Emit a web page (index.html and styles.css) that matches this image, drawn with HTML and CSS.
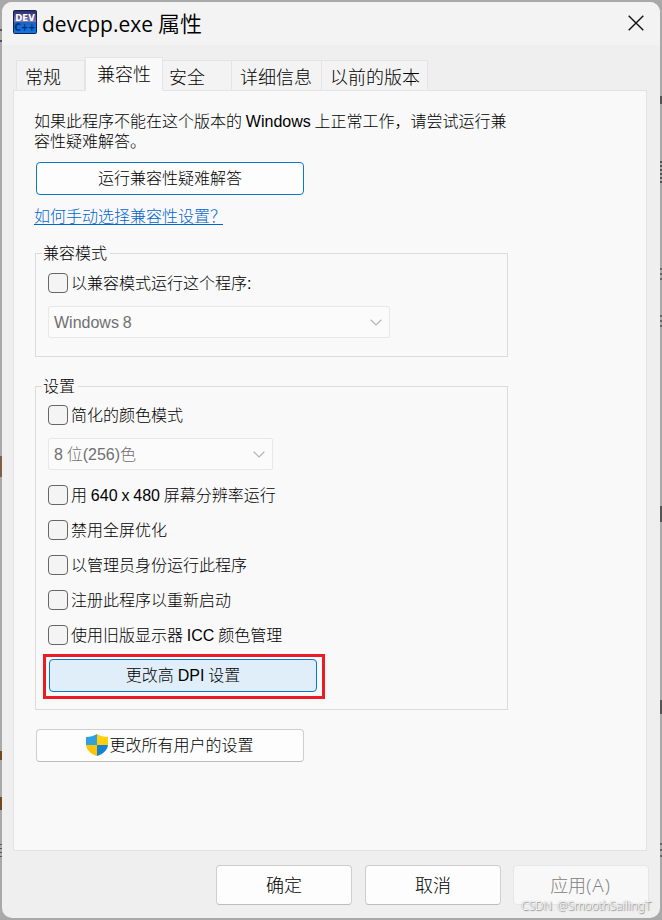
FILE: index.html
```html
<!DOCTYPE html>
<html lang="zh-CN">
<head>
<meta charset="utf-8">
<title>devcpp.exe 属性</title>
<link rel="stylesheet" href="styles.css">
</head>
<body>
<i class="speck s1"></i><i class="speck s2"></i><i class="speck s3"></i><i class="speck s4"></i><i class="speck s5"></i><i class="speck s6"></i>
<i class="speck r1"></i><i class="speck r2"></i><i class="speck r3"></i><i class="speck r4"></i><i class="speck r5"></i><i class="speck r6"></i><i class="speck r7"></i>
<main class="dialog">
  <header class="titlebar">
    <svg class="app-icon" width="24" height="24" viewBox="0 0 24 24">
      <defs>
        <linearGradient id="top" x1="0" y1="0" x2="0" y2="1"><stop offset="0" stop-color="#26266c"/><stop offset=".5" stop-color="#8580b4"/><stop offset=".52" stop-color="#2063c4"/><stop offset="1" stop-color="#0878e8"/></linearGradient>
      </defs>
      <rect x=".5" y=".5" width="23" height="23" rx="1" fill="url(#top)" stroke="#14204c"/>
      <text class="dev" x="2.3" y="11" textLength="19.5" lengthAdjust="spacingAndGlyphs">DEV</text>
      <text class="cpp" x="1.5" y="21" textLength="21" lengthAdjust="spacingAndGlyphs">C++</text>
    </svg>
    <h1 class="title"><span class="title-name">devcpp.exe</span><span class="title-kind">属性</span></h1>
    <svg class="close" width="16" height="16" viewBox="0 0 16 16"><path d="M.7.7l14.6 14.6M15.3.7L.7 15.3" fill="none" stroke="#111" stroke-width="1.4"/></svg>
  </header>
  <nav class="tabs">
    <span class="tab t-general">常规</span>
    <span class="tab t-compat active">兼容性</span>
    <span class="tab t-security">安全</span>
    <span class="tab t-details">详细信息</span>
    <span class="tab t-previous">以前的版本</span>
  </nav>
  <section class="panel">
    <p class="intro">如果此程序不能在这个版本的 Windows 上正常工作，请尝试运行兼<br>容性疑难解答。</p>
    <button class="button primary">运行兼容性疑难解答</button>
    <a class="link">如何手动选择兼容性设置？</a>
    <div class="group mode">
      <span class="legend">兼容模式</span>
      <label class="check"><i class="box"></i><span class="indent">以兼容模式运行这个程序:</span></label>
      <div class="select wide"><span>Windows 8</span><svg width="12" height="7" viewBox="0 0 12 7"><path d="M.7.7L6 5.9 11.3.7" fill="none" stroke="#b4b4b4" stroke-width="1.2"/></svg></div>
    </div>
    <div class="group settings">
      <span class="legend">设置</span>
      <label class="check"><i class="box"></i><span>简化的颜色模式</span></label>
      <div class="select"><span>8 位(256)色</span><svg width="12" height="7" viewBox="0 0 12 7"><path d="M.7.7L6 5.9 11.3.7" fill="none" stroke="#b4b4b4" stroke-width="1.2"/></svg></div>
      <div class="checks">
        <label class="check"><i class="box"></i><span>用 640 x 480 屏幕分辨率运行</span></label>
        <label class="check"><i class="box"></i><span>禁用全屏优化</span></label>
        <label class="check"><i class="box"></i><span class="indent">以管理员身份运行此程序</span></label>
        <label class="check"><i class="box"></i><span>注册此程序以重新启动</span></label>
        <label class="check"><i class="box"></i><span>使用旧版显示器 ICC 颜色管理</span></label>
      </div>
      <div class="highlight"><button class="button hot">更改高 DPI 设置</button></div>
    </div>
    <button class="button all-users">
      <svg width="22" height="22" viewBox="0 0 22 22">
        <defs><clipPath id="shield"><path d="M11 0C8 2 4 3 0 3v7c0 6 5 10 11 12 6-2 11-6 11-12V3c-4 0-8-1-11-3z"/></clipPath></defs>
        <g clip-path="url(#shield)"><path fill="#2fa0e0" d="M0 0h11v11H0z"/><path fill="#fdd00a" d="M11 0h11v11H11z"/><path fill="#fcc404" d="M0 11h11v11H0z"/><path fill="#1580d4" d="M11 11h11v11H11z"/></g>
      </svg><span>更改所有用户的设置</span>
    </button>
  </section>
  <footer class="actions">
    <button class="action">确定</button>
    <button class="action">取消</button>
    <button class="action disabled">应用<span class="key">(A)</span></button>
  </footer>
</main>
<span class="watermark">CSDN @SmoothSailingT</span>
</body>
</html>
```
FILE: styles.css
```css
* { box-sizing: border-box; }

body {
  margin: 0;
  width: 662px;
  height: 920px;
  padding: 2px;
  overflow: hidden;
  position: relative;
  background: #a9a9a9;
  color: #000;
  font: 300 16px/20px "Liberation Sans", "Noto Sans CJK SC", sans-serif;
  word-spacing: -0.6px;
  white-space: nowrap;
}

h1, p { margin: 0; font-weight: inherit; }

button { font: inherit; color: inherit; padding: 0; word-spacing: inherit; }

.dialog {
  width: 658px;
  height: 916px;
  border-radius: 10px;
  overflow: hidden;
  background: #efefef;
}

.titlebar {
  display: flex;
  height: 43px;
  padding: 8px 16px 0 11px;
  background: #f3f3f3;
}

.app-icon { flex: none; }

.dev { font: bold 9.5px "DejaVu Sans", sans-serif; fill: #fff; }
.cpp { font: bold 10px "DejaVu Sans", sans-serif; fill: #062f70; }

.title {
  display: flex;
  gap: 5px;
  margin-left: 5px;
  font-size: 22px;
  line-height: 28px;
}

.title-name { font-family: "Open Sans", sans-serif; font-size: 21px; font-weight: 400; }
.title-kind { font-family: "Noto Sans CJK SC", sans-serif; font-weight: 350; line-height: 24px; }

.close { margin: 5px 0 0 auto; }

.tabs {
  display: flex;
  align-items: flex-end;
  height: 46px;
  padding: 0 14px;
  margin-bottom: -1px;
  position: relative;
  font-size: 18px;
  line-height: 24px;
}

.tab {
  height: 31px;
  padding: 5px 0 0 8px;
  border: 1px solid #e4e4e4;
  border-left-width: 0;
  background: #f3f3f3;
}

.t-general { width: 69px; border-left-width: 1px; }
.t-compat { width: 78px; }
.t-security { width: 69px; padding-left: 6px; }
.t-details { width: 90px; }
.t-previous { width: 106px; }

.tab.active {
  height: 34px;
  padding: 5px 0 0 11px;
  border-left-width: 1px;
  border-bottom-color: #f9f9f9;
  background: #f9f9f9;
}

.panel {
  width: 634px;
  height: 761px;
  margin-left: 11px;
  padding: 21px 0 0 20px;
  border: 1px solid #e3e3e3;
  background: #f9f9f9;
}

.button {
  display: flex;
  align-items: center;
  justify-content: center;
  width: 268px;
  height: 33px;
  margin-left: 2px;
  border: 1px solid #cfcfcf;
  border-bottom-color: #bcbcbc;
  border-radius: 4px;
  background: #fdfdfd;
}

.button.primary { margin-top: 10px; border-color: #0b78ca; }

.link {
  display: block;
  width: 189px;
  height: 18px;
  margin: 12px 0 1px;
  line-height: 20px;
  border-bottom: 1px solid #0066cc;
  color: #0066cc;
}

.group {
  position: relative;
  width: 473px;
  margin-left: 1px;
  border: 1px solid #dcdcdc;
  padding-left: 12px;
}

.mode { height: 104px; margin-top: 28px; padding-top: 19px; }
.settings { height: 324px; margin-top: 29px; padding-top: 18px; }

.legend {
  position: absolute;
  left: 6px;
  top: -10px;
  padding: 0 3px 0 1px;
  background: #f9f9f9;
}

.check { display: flex; gap: 3px; height: 20px; }
.check span { padding-top: 1px; }

.box {
  width: 20px;
  height: 20px;
  border: 1px solid #666;
  border-radius: 4px;
  background: #f4f4f4;
}

.select {
  display: flex;
  align-items: center;
  justify-content: space-between;
  width: 225px;
  height: 32px;
  margin-top: 13px;
  padding: 0 7px 0 5px;
  border: 1px solid #e8e8e8;
  border-radius: 2px;
  background: #fbfbfb;
  color: #707070;
}

.select span { padding-top: 2px; }
.select.wide { width: 342px; }

.checks { display: grid; gap: 15px; margin-top: 15px; }

.highlight {
  width: 282px;
  height: 45px;
  margin: 9px 0 0 -5px;
  padding: 2px 2px 2px 3px;
  border: 3px solid #ed1c24;
}

.button.hot { margin-left: 0; border-color: #0078d4; background: #e0eef9; }

.all-users { margin-top: 19px; }
.all-users svg { margin: -2px 1px 0 0; }

.actions {
  display: flex;
  gap: 13px;
  margin: 14px 0 0 214px;
}

.action {
  width: 136px;
  height: 40px;
  padding-top: 1px;
  border: 1px solid #cfcfcf;
  border-bottom-color: #bcbcbc;
  border-radius: 4px;
  background: #fdfdfd;
  font-size: 18px;
}

.action.disabled {
  margin-left: -1px;
  padding-right: 1px;
  border-color: #e6e6e6;
  background: #f8f8f8;
  color: #808080;
}

.key { font-family: "Open Sans", sans-serif; font-size: 19px; letter-spacing: 1px; }

.watermark {
  position: absolute;
  left: 521px;
  top: 897px;
  color: #fff;
  font: 300 12px/18px "Noto Sans", sans-serif;
  word-spacing: 2px;
  letter-spacing: -0.1px;
  text-shadow: 1px 1px 1px #888, 0 0 1px #999;
}

.speck { position: absolute; width: 2px; background: #555; }
.s1 { left: 0; top: 29px; height: 2px; }
.s2 { left: 0; top: 40px; height: 2px; }
.s3 { left: 0; top: 456px; height: 21px; background: #806044; }
.s4 { left: 0; top: 751px; height: 9px; background: #704822; }
.s5 { left: 0; top: 797px; height: 13px; background: #704822; }
.s6 { left: 0; top: 844px; height: 16px; background: repeating-linear-gradient(#555 0 1px, #a9a9a9 1px 4px); }
.r1 { left: 660px; top: 96px; height: 8px; }
.r2 { left: 660px; top: 161px; height: 22px; background: repeating-linear-gradient(#555 0 2px, #a9a9a9 2px 4px); }
.r3 { left: 660px; top: 268px; height: 14px; background: repeating-linear-gradient(#666 0 2px, #a9a9a9 2px 5px); }
.r4 { left: 660px; top: 315px; height: 15px; background: repeating-linear-gradient(#666 0 2px, #a9a9a9 2px 5px); }
.r5 { left: 660px; top: 506px; height: 16px; }
.r6 { left: 660px; top: 700px; height: 14px; }
.r7 { left: 660px; top: 843px; height: 17px; background: repeating-linear-gradient(#666 0 2px, #a9a9a9 2px 6px); }
```
